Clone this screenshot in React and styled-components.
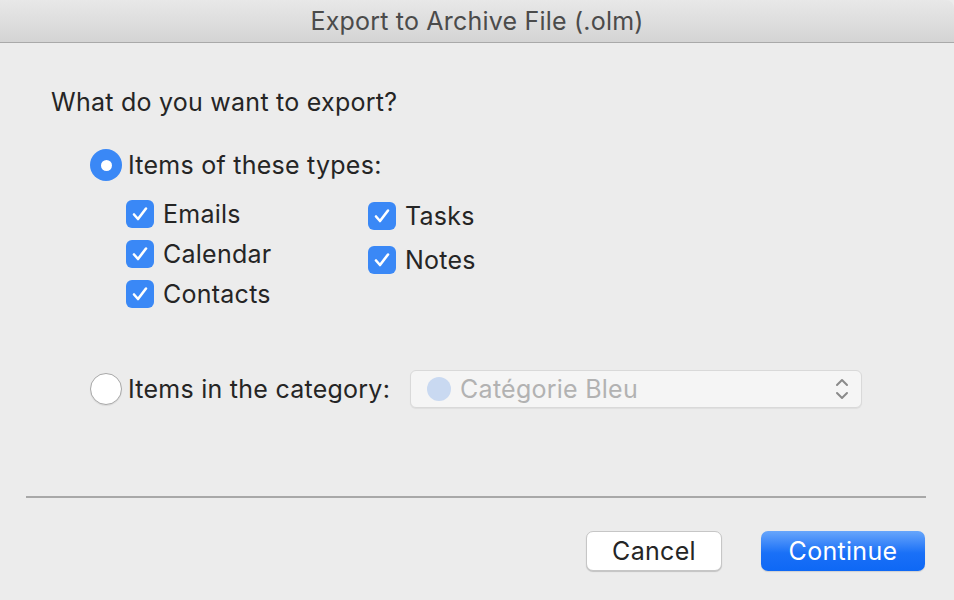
import React from "react";
import styled, { createGlobalStyle } from "styled-components";

const Global = createGlobalStyle`
  html, body { margin: 0; padding: 0; background: #ececec; }
  body { font-family: Inter, "Noto Sans", "Liberation Sans", sans-serif; }
`;

const Window = styled.div`
  width: 954px;
  height: 600px;
  background: #ececec;
  display: flex;
  flex-direction: column;
  overflow: hidden;
  color: #252525;
  font-size: 25px;
  letter-spacing: 0.25px;
`;

const TitleBar = styled.div`
  height: 42px;
  flex: none;
  border-bottom: 1px solid #a9a9a9;
  background: linear-gradient(#e8e8e8, #d4d4d4);
  border-top-right-radius: 8px;
  display: flex;
  align-items: center;
  justify-content: center;
  color: #4b4b4b;
  font-size: 25px;
  letter-spacing: 0.2px;
`;

const Body = styled.div`
  display: flex;
  flex-direction: column;
  padding: 0 28px 0 26px;
`;

const Heading = styled.div`
  margin-top: 45px;
  margin-left: 25px;
  line-height: 28px;
  height: 28px;
`;

const OptionRow = styled.label`
  display: flex;
  align-items: center;
  gap: 6px;
  margin-left: 64px;
  margin-top: ${(p) => p.$top}px;
  height: ${(p) => p.$h || 32}px;
`;

const Radio = styled.span`
  width: 32px;
  height: 32px;
  box-sizing: border-box;
  border-radius: 50%;
  flex: none;
  display: flex;
  align-items: center;
  justify-content: center;
  background: ${(p) => (p.$on ? "#3a88f6" : "#ffffff")};
  border: ${(p) => (p.$on ? "none" : "1px solid #a8a8a8")};
  box-shadow: ${(p) => (p.$on ? "none" : "0 1px 1px rgba(0,0,0,0.08)")};
  &::after {
    content: "";
    display: ${(p) => (p.$on ? "block" : "none")};
    width: 11px;
    height: 11px;
    border-radius: 50%;
    background: #fff;
  }
`;

const Columns = styled.div`
  display: flex;
  margin-left: 100px;
  margin-top: 19px;
`;

const Column = styled.div`
  display: flex;
  flex-direction: column;
  gap: ${(p) => p.$gap}px;
  margin-top: ${(p) => p.$top || 0}px;
  width: ${(p) => p.$w || "auto"};
`;

const CheckRow = styled.label`
  display: flex;
  align-items: center;
  gap: 9px;
  height: 28px;
`;

const Box = styled.span`
  width: 28px;
  height: 28px;
  border-radius: 6px;
  background: #3a88f6;
  flex: none;
  display: flex;
  align-items: center;
  justify-content: center;
`;

const Select = styled.div`
  margin-left: 14px;
  width: 452px;
  height: 38px;
  box-sizing: border-box;
  border: 1px solid #d9d9d9;
  border-radius: 6px;
  background: #f5f5f5;
  box-shadow: 0 1px 1px rgba(0,0,0,0.06);
  display: flex;
  align-items: center;
  padding: 0 12px 0 16px;
  color: #b2b2b2;
`;

const Dot = styled.span`
  width: 24px;
  height: 24px;
  border-radius: 50%;
  background: #c9d9f1;
  flex: none;
  margin-right: 9px;
`;

const SelectText = styled.span`
  flex: 1;
`;

const Separator = styled.div`
  height: 2px;
  background: #a8a8a8;
  margin-top: 88px;
`;

const Footer = styled.div`
  display: flex;
  justify-content: flex-end;
  gap: 39px;
  margin-top: 33px;
  padding-right: 1px;
`;

const Button = styled.button`
  height: 40px;
  width: ${(p) => p.$w}px;
  border-radius: 7px;
  font-family: inherit;
  font-size: 25px;
  letter-spacing: 0.3px;
  box-sizing: border-box;
  padding: 0;
  ${(p) =>
    p.$primary
      ? `
    border: none;
    color: #fff;
    background: linear-gradient(#68a6fb, #1a70f7 55%, #0e68f5);
    box-shadow: 0 1px 1px rgba(0,0,0,0.12);
  `
      : `
    border: 1px solid #c6c6c6;
    color: #252525;
    background: #fff;
    box-shadow: 0 1px 1px rgba(0,0,0,0.18);
  `}
`;

const Check = () => (
  <svg width="18" height="16" viewBox="0 0 18 16" fill="none">
    <path d="M3 8.5 L7 13 L15 2.5" stroke="#fff" strokeWidth="2.6" strokeLinecap="round" strokeLinejoin="round" />
  </svg>
);

const Chevrons = () => (
  <svg width="14" height="26" viewBox="0 0 14 26" fill="none">
    <path d="M2 9 L7 4 L12 9" stroke="#8a8a8a" strokeWidth="2" strokeLinecap="round" strokeLinejoin="round" />
    <path d="M2 17 L7 22 L12 17" stroke="#8a8a8a" strokeWidth="2" strokeLinecap="round" strokeLinejoin="round" />
  </svg>
);

const Item = ({ children }) => (
  <CheckRow>
    <Box><Check /></Box>
    {children}
  </CheckRow>
);

export default function App() {
  return (
    <Window>
      <Global />
      <TitleBar>Export to Archive File (.olm)</TitleBar>
      <Body>
        <Heading>What do you want to export?</Heading>
        <OptionRow $top={33}>
          <Radio $on />
          Items of these types:
        </OptionRow>
        <Columns>
          <Column $gap={12} $w="242px">
            <Item>Emails</Item>
            <Item>Calendar</Item>
            <Item>Contacts</Item>
          </Column>
          <Column $gap={16} $top={2}>
            <Item>Tasks</Item>
            <Item>Notes</Item>
          </Column>
        </Columns>
        <OptionRow $top={62} $h={38}>
          <Radio />
          Items in the category:
          <Select>
            <Dot />
            <SelectText>Catégorie Bleu</SelectText>
            <Chevrons />
          </Select>
        </OptionRow>
        <Separator />
        <Footer>
          <Button $w={136}>Cancel</Button>
          <Button $primary $w={164}>Continue</Button>
        </Footer>
      </Body>
    </Window>
  );
}
